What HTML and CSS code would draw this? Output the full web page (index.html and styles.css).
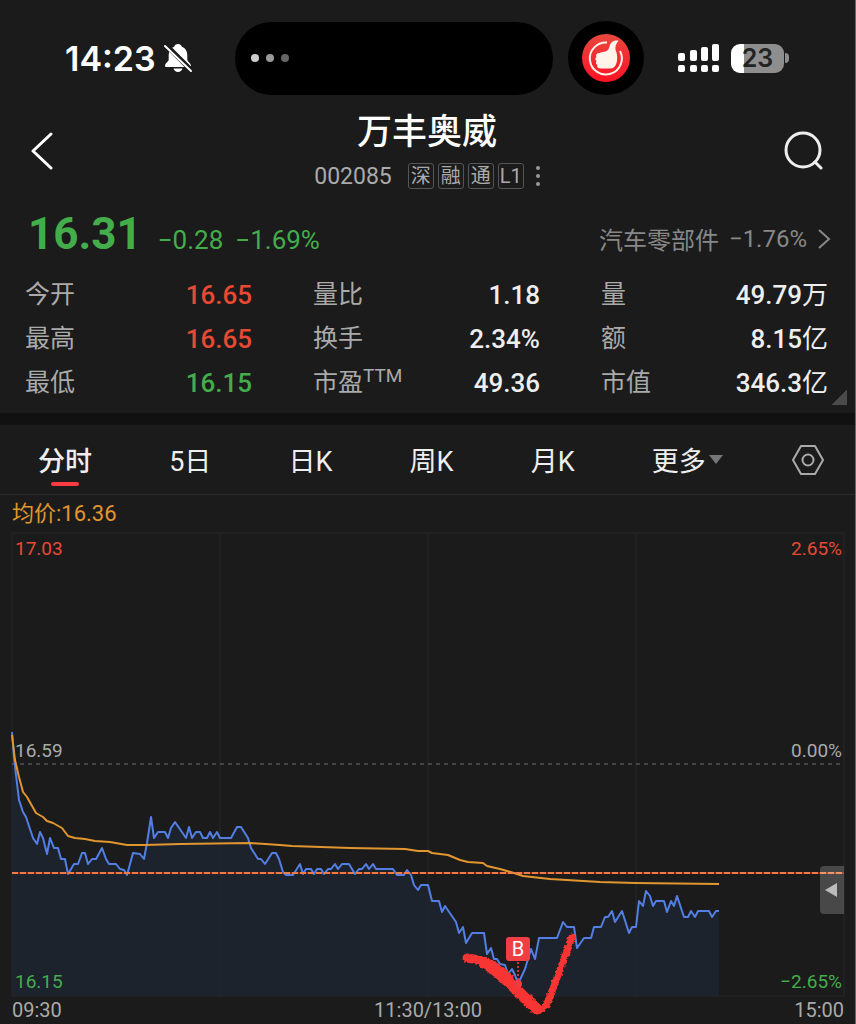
FILE: index.html
```html
<!DOCTYPE html>
<html lang="zh-CN">
<head>
	<meta charset="utf-8">
	<meta name="viewport" content="width=device-width, initial-scale=1">
	<title>万丰奥威 002085</title>
	<link rel="stylesheet" href="styles.css">
</head>

<body>

	<div class="status">
		<div class="clock">
			<span>14:23</span>
			<svg class="bell" viewBox="0 0 28 30" width="28" height="30">
				<path fill="#fff" d="M14 1c-2 0-3.400 1.200-3.900 2.800C6.500 5.200 4.800 8.300 4.700 12v4.500c0 2-3.700 4-3.700 6.200 0 .8.600 1.300 1.500 1.300h23c.9 0 1.500-.5 1.500-1.300 0-2.200-3.700-4.200-3.700-6.200V12c-.1-3.700-1.800-6.800-5.400-8.200C17.400 2.200 16 1 14 1zM9.500 25.500h9c-.6 2.200-2.300 3.500-4.500 3.500s-3.900-1.300-4.500-3.500z"/>
				<path stroke="#1b1b1b" stroke-width="5" d="M1 1l27 27"/>
				<path stroke="#fff" stroke-width="2" stroke-linecap="round" d="M1 3l26 25"/>
			</svg>
		</div>
		<div class="island"><i></i><i></i><i></i></div>
		<div class="bubble">
			<svg viewBox="0 0 48 48" width="48" height="48">
				<defs>
					<linearGradient id="red" x1="0" y1="0" x2="0" y2="1">
						<stop offset="0" stop-color="#e8483f"/>
						<stop offset="1" stop-color="#ff1123"/>
					</linearGradient>
				</defs>
				<circle cx="24" cy="24" r="24" fill="url(#red)"/>
				<path fill="none" stroke="#fff3ea" stroke-width="2" d="M25 8.500A16 16 0 1 0 38 17"/>
				<path fill="#fff3ea" d="M17 19c2-1 6-1 8.500-2.500 2-1.500 1.500-5 3.500-7.500 2-2.200 5-2.600 7.500-2.300-2.500 3-3.500 5.500-3 9.300 1.500 3 2 6.500 1.500 10.500-.5 4.500-2.500 7.500-6 8H18c-2.500-.2-3.500-1.700-2.500-3.500-1.800-.8-2-2.500-1-4-1.600-1-1.600-3 0-4-1-1.700-.3-3.500 2.500-4z"/>
			</svg>
		</div>
		<div class="signal">
			<svg viewBox="0 0 42 30" width="42" height="30" fill="#fff">
				<rect x="0" y="10" width="7" height="8" rx="2"/>
				<rect x="12" y="7" width="7" height="11" rx="2"/>
				<rect x="23" y="4" width="7" height="14" rx="2"/>
				<rect x="34" y="1" width="7" height="17" rx="2"/>
				<rect x="0" y="22" width="7" height="7" rx="2"/>
				<rect x="12" y="22" width="7" height="7" rx="2"/>
				<rect x="23" y="22" width="7" height="7" rx="2"/>
				<rect x="34" y="22" width="7" height="7" rx="2"/>
			</svg>
			<span class="battery">23</span>
			<span class="cap"></span>
		</div>
	</div>

	<div class="header">
		<button class="back" aria-label="返回">
			<svg viewBox="0 0 22 40" width="22" height="40" fill="none" stroke="#fff" stroke-width="3" stroke-linecap="round" stroke-linejoin="round"><path d="M20 3L2 20l18 17"/></svg>
		</button>
		<div class="title">
			<h1>万丰奥威</h1>
			<div class="sub">
				<span class="code">002085</span>
				<span class="tag">深</span>
				<span class="tag">融</span>
				<span class="tag">通</span>
				<span class="tag">L1</span>
				<svg class="dots" viewBox="0 0 4 20" width="4" height="20" fill="#999"><circle cx="2" cy="2" r="2"/><circle cx="2" cy="10" r="2"/><circle cx="2" cy="18" r="2"/></svg>
			</div>
		</div>
		<button class="search" aria-label="搜索">
			<svg viewBox="0 0 40 40" width="40" height="40" fill="none" stroke="#eee" stroke-width="3" stroke-linecap="round"><circle cx="20" cy="19" r="17"/><path d="M32 31l6 6"/></svg>
		</button>
	</div>

	<div class="quote">
		<span class="price">16.31</span>
		<span class="change">−0.28</span>
		<span class="change">−1.69%</span>
		<a class="sector" href="#">
			<span>汽车零部件</span>
			<span class="pct">−1.76%</span>
			<svg viewBox="0 0 14 20" width="14" height="20" fill="none" stroke="#888" stroke-width="2"><path d="M2 1l10 9-10 9"/></svg>
		</a>
	</div>

	<div class="stats">
		<dl>
			<dt>今开</dt><dd class="up">16.65</dd>
			<dt>最高</dt><dd class="up">16.65</dd>
			<dt>最低</dt><dd class="down">16.15</dd>
		</dl>
		<dl>
			<dt>量比</dt><dd>1.18</dd>
			<dt>换手</dt><dd>2.34%</dd>
			<dt>市盈<sup>TTM</sup></dt><dd>49.36</dd>
		</dl>
		<dl>
			<dt>量</dt><dd>49.79<span class="unit">万</span></dd>
			<dt>额</dt><dd>8.15<span class="unit">亿</span></dd>
			<dt>市值</dt><dd>346.3<span class="unit">亿</span></dd>
		</dl>
		<span class="corner"></span>
	</div>

	<div class="tabs">
		<button class="active">分时</button>
		<button>5日</button>
		<button>日K</button>
		<button>周K</button>
		<button>月K</button>
		<button class="more">更多<span class="arrow"></span></button>
		<button class="set" aria-label="设置">
			<svg viewBox="0 0 32 32" width="32" height="32" fill="none" stroke="#aaa" stroke-width="2" stroke-linejoin="round"><path d="M9 2h14l8 14-8 14H9L1 16z"/><circle cx="16" cy="16" r="5.500"/></svg>
		</button>
	</div>

	<div class="avg">均价:16.36</div>

	<div class="chart">
		<svg class="plot" viewBox="12 533 832 463">
			<defs>
				<filter id="rough" x="-10%" y="-10%" width="120%" height="120%">
					<feTurbulence type="fractalNoise" baseFrequency="0.35" numOctaves="2" seed="4"/>
					<feDisplacementMap in="SourceGraphic" scale="4" xChannelSelector="R" yChannelSelector="G"/>
				</filter>
			</defs>
			<!-- price area -->
			<path class="area" d="M12 996V732L14 757 16 775 19 800 23 812 26 817 33 838 37 844 40 832 43 838 47 854 50 838 54 848 58 848 61 859 65 859 68 874 74 864 78 864 82 853 85 853 88 864 92 859 96 859 102 848 106 859 109 864 116 864 120 869 124 870 127 875 133 853 140 854 144 859 147 843 151 817 154 838 158 832 165 832 168 838 171 828 175 822 186 838 189 827 192 838 196 832 200 832 203 838 207 838 210 832 213 838 217 832 220 838 231 838 237 827 241 827 248 838 251 848 258 859 261 859 265 864 272 853 276 853 279 859 283 872 286 875 293 875 300 864 303 874 306 869 311 869 314 874 317 869 321 869 324 874 328 869 331 869 335 864 338 869 342 864 349 864 355 874 359 869 362 869 366 864 369 869 373 864 376 869 393 869 397 875 404 875 407 870 411 875 414 885 418 890 421 885 428 885 432 901 439 901 442 912 445 906 456 922 459 933 463 927 466 943 472 933 484 933 487 954 491 948 494 959 497 959 500 964 505 965 508 974 512 969 515 975 518 984 525 969 531 949 535 959 539 938 557 938 563 922 567 927 574 927 577 948 584 938 591 938 594 927 601 927 605 917 608 917 612 911 615 922 622 911 629 933 632 927 636 927 639 901 643 906 646 891 650 896 653 906 656 901 664 901 667 912 671 901 674 906 677 896 684 917 688 917 691 911 695 917 698 911 709 911 712 917 716 911 719 911V996z"/>
			<path class="grid" d="M12 533h832v463H12zM220 533v463M428 533v463M636 533v463"/>
			<path class="zero" d="M12 764H844"/>
			<path class="now-bg" d="M12 873H844"/>
			<path class="price-line" d="M12 732L14 757 16 775 19 800 23 812 26 817 33 838 37 844 40 832 43 838 47 854 50 838 54 848 58 848 61 859 65 859 68 874 74 864 78 864 82 853 85 853 88 864 92 859 96 859 102 848 106 859 109 864 116 864 120 869 124 870 127 875 133 853 140 854 144 859 147 843 151 817 154 838 158 832 165 832 168 838 171 828 175 822 186 838 189 827 192 838 196 832 200 832 203 838 207 838 210 832 213 838 217 832 220 838 231 838 237 827 241 827 248 838 251 848 258 859 261 859 265 864 272 853 276 853 279 859 283 872 286 875 293 875 300 864 303 874 306 869 311 869 314 874 317 869 321 869 324 874 328 869 331 869 335 864 338 869 342 864 349 864 355 874 359 869 362 869 366 864 369 869 373 864 376 869 393 869 397 875 404 875 407 870 411 875 414 885 418 890 421 885 428 885 432 901 439 901 442 912 445 906 456 922 459 933 463 927 466 943 472 933 484 933 487 954 491 948 494 959 497 959 500 964 505 965 508 974 512 969 515 975 518 984 525 969 531 949 535 959 539 938 557 938 563 922 567 927 574 927 577 948 584 938 591 938 594 927 601 927 605 917 608 917 612 911 615 922 622 911 629 933 632 927 636 927 639 901 643 906 646 891 650 896 653 906 656 901 664 901 667 912 671 901 674 906 677 896 684 917 688 917 691 911 695 917 698 911 709 911 712 917 716 911 719 911"/>
			<!-- average line -->
			<path class="avg-line" d="M12 735L15 760 19 777 23 792 27 797 36 813 43 817 47 821 53 823 62 828 68 836 75 838 85 839 95 841 110 842 127 845 145 845 180 844 250 843 280 845 292 846 350 848 405 849 418 851 428 851 432 853 448 855 460 860 468 862 483 863 487 866 500 869 514 873 523 876 550 879 600 882 635 883 719 884"/>
			<path class="now" d="M12 873H844"/>
			<!-- hand drawn tick -->
			<g class="brush" filter="url(#rough)">
				<path stroke-width="9" d="M467 958c18 2 30 8 42 20"/>
				<path stroke-width="11" d="M484 963c18 9 36 32 53 46"/>
				<path stroke-width="7" d="M538 1010c6-1 9-5 13-16l21-57"/>
			</g>
			<path class="stem" d="M518 962V982"/>
			<circle cx="518" cy="984" r="4" fill="#ee3b40"/>
			<rect x="506" y="937" width="24" height="24" rx="3" fill="#f03e42"/>
			<text class="buy" x="518" y="956" text-anchor="middle">B</text>
		</svg>
		<span class="label top up">17.03</span>
		<span class="label top right up">2.65%</span>
		<span class="label mid">16.59</span>
		<span class="label mid right">0.00%</span>
		<span class="label low down">16.15</span>
		<span class="label low right down">−2.65%</span>
		<button class="drawer" aria-label="展开"></button>
	</div>
	<div class="times">
		<span>09:30</span>
		<span>11:30/13:00</span>
		<span>15:00</span>
	</div>

</body>
</html>
```
FILE: styles.css
```css
* {
	box-sizing:border-box;
}
body {
	margin:0;
	background-color:#1b1b1b;
	border-right:1px solid #666;
	font-family:Roboto, "Noto Sans CJK SC", sans-serif;
	color:#eee;
}
button {
	background:none;
	border:none;
	padding:0;
	color:inherit;
	font-family:inherit;
}
svg {
	display:block;
}
.up {
	color:#e64a33;
}
.down {
	color:#44ad4b;
}

/* status bar */
.status {
	display:grid;
	grid-template-columns:235fr 318fr 91fr 211fr;
	align-items:center;
	padding-top:21px;
}
.clock {
	display:flex;
	align-items:center;
	gap:8px;
	padding-left:65px;
	font-family:Inter, sans-serif;
	font-size:34px;
	font-weight:600;
	color:#fff;
}
.island {
	display:flex;
	align-items:center;
	gap:7px;
	height:73px;
	padding-left:16px;
	border-radius:37px;
	background-color:#000;
}
.island i {
	width:8px;
	height:8px;
	border-radius:4px;
	background-color:#ccc;
}
.island i:nth-child(2) {
	background-color:#999;
}
.island i:nth-child(3) {
	background-color:#666;
}
.bubble {
	justify-self:end;
	padding:13px 14px;
	border-radius:50%;
	background-color:#000;
}
.signal {
	display:flex;
	align-items:center;
	padding-left:34px;
}
.battery {
	width:53px;
	height:29px;
	margin-left:11px;
	border-radius:9px;
	background:linear-gradient(to right,#fff 13px,#8e8e8e 13px);
	color:#222;
	font:600 25px/29px Inter, sans-serif;
	text-align:center;
}
.cap {
	width:4px;
	height:10px;
	margin-left:1px;
	border-radius:0 5px 5px 0;
	background-color:#8e8e8e;
}

/* title */
.header {
	display:grid;
	grid-template-columns:1fr auto 1fr;
	align-items:center;
	padding:13px 32px 0 31px;
}
.search {
	justify-self:end;
}
.title {
	text-align:center;
}
h1 {
	margin:0;
	font-size:35px;
	line-height:50px;
	font-weight:500;
	color:#fff;
}
.sub {
	display:flex;
	align-items:center;
	justify-content:center;
	gap:4px;
	height:36px;
	color:#aaa;
}
.code {
	margin-right:12px;
	font-size:23px;
}
.tag {
	width:26px;
	height:26px;
	border:1px solid #555;
	border-radius:3px;
	font-size:20px;
	line-height:24px;
}
.dots {
	margin-left:8px;
}

/* price */
.quote {
	display:flex;
	align-items:baseline;
	height:79px;
	padding:0 24px 0 28px;
	color:#44ad4b;
}
.price {
	margin-right:16px;
	font-size:44px;
	line-height:80px;
	font-weight:bold;
}
.change {
	margin-right:12px;
	font-size:26px;
}
.sector {
	display:flex;
	align-items:center;
	margin-left:auto;
	color:#888;
	font-size:24px;
	text-decoration:none;
}
.pct {
	margin:0 10px;
}
.stats {
	position:relative;
	display:grid;
	grid-template-columns:repeat(3,1fr);
	gap:61px;
	padding:0 27px 8px 25px;
	border-bottom:12px solid #111;
}
dl {
	display:grid;
	grid-template-columns:auto auto;
	justify-content:space-between;
	margin:0;
	line-height:44px;
}
dt {
	font-size:25px;
	color:#aaa;
}
dt sup {
	font-size:19px;
	line-height:0;
}
dd {
	margin:0;
	text-align:right;
	font-size:26px;
	font-weight:500;
}
.unit {
	font-weight:normal;
}
.corner {
	position:absolute;
	right:8px;
	bottom:8px;
	border:solid transparent;
	border-width:15px 0 0 15px;
	background:linear-gradient(135deg,transparent 50%,#4a4a4a 50%) border-box;
}

/* tabs */
.tabs {
	display:flex;
	align-items:center;
	justify-content:space-between;
	height:70px;
	padding:0 31px 0 38px;
	border-bottom:1px solid #292929;
}
.tabs button {
	position:relative;
	height:69px;
	font-size:27px;
}
.tabs .active {
	font-weight:500;
}
.tabs .active:after {
	content:"";
	position:absolute;
	left:13px;
	bottom:8px;
	width:28px;
	height:4px;
	border-radius:2px;
	background-color:#f93a40;
}
.tabs .more {
	display:flex;
	align-items:center;
	gap:3px;
}
.tabs .set {
	margin-left:-8px;
}
.arrow {
	border:solid transparent;
	border-width:9px 7px 0;
	border-top-color:#777;
}
.avg {
	padding-left:12px;
	font-size:22px;
	line-height:38px;
	color:#e2962f;
}

/* chart */
.chart {
	position:relative;
	margin:0 11px 0 12px;
}
.plot {
	width:100%;
	height:auto;
	overflow:visible;
	fill:none;
}
.area {
	fill:#1c232d;
}
.grid {
	stroke:#26282a;
}
.zero {
	stroke:#707070;
	stroke-dasharray:4 4;
}
.price-line {
	stroke:#537fe4;
	stroke-width:2;
	stroke-linejoin:round;
}
.avg-line {
	stroke:#e2962f;
	stroke-width:2;
	stroke-linejoin:round;
}
.now-bg {
	stroke:#7c2c18;
	stroke-width:2;
}
.now {
	stroke:#ee7a45;
	stroke-width:2;
	stroke-dasharray:6 2;
}
.brush {
	stroke:#f83630;
	stroke-linecap:round;
}
.stem {
	stroke:#c43a3e;
	stroke-width:2;
	stroke-dasharray:2 2;
}
.buy {
	fill:#fff;
	font-size:20px;
}
.label {
	position:absolute;
	left:3px;
	font-size:19px;
	line-height:28px;
}
.right {
	left:auto;
	right:2px;
}
.top {
	top:2px;
}
.mid {
	bottom:50%;
	color:#aaa;
}
.low {
	bottom:0;
}
.drawer {
	position:absolute;
	right:0;
	top:72%;
	width:24px;
	height:48px;
	border-radius:4px 0 0 4px;
	background-color:#ffffff33;
}
.drawer:before {
	content:"";
	display:block;
	margin-left:5px;
	width:0;
	border:solid transparent;
	border-width:7px 12px 7px 0;
	border-right-color:#bbb;
}
.times {
	display:grid;
	grid-template-columns:1fr auto 1fr;
	padding:0 11px 0 12px;
	font-size:20px;
	line-height:28px;
	color:#aaa;
}
.times span:last-child {
	text-align:right;
}
```
